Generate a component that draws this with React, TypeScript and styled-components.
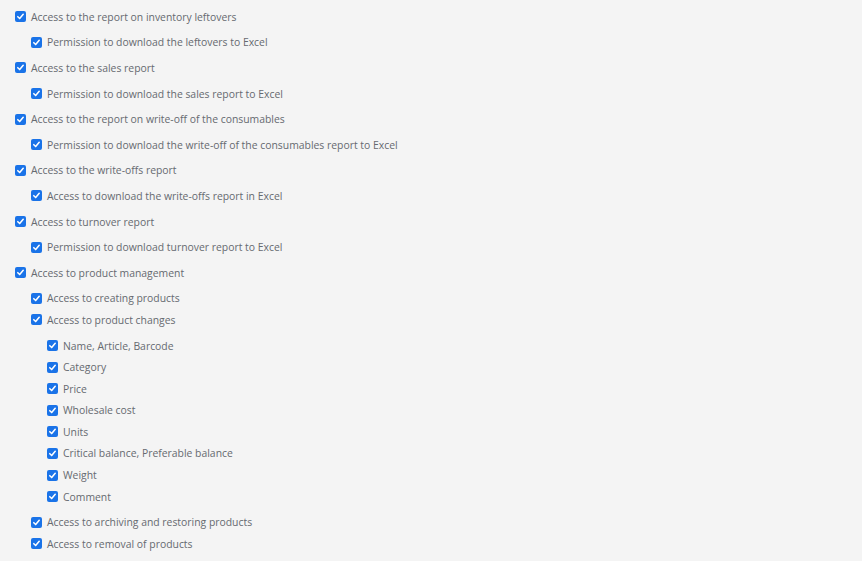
import React from "react";
import styled, { createGlobalStyle } from "styled-components";

const Global = createGlobalStyle`
  html, body { margin: 0; padding: 0; background: #f4f4f4; }
  body { font-family: "Open Sans", "Noto Sans", sans-serif; }
`;

type Node = { label: string; children?: Node[] };

const data: Node[] = [
  { label: "Access to the report on inventory leftovers", children: [{ label: "Permission to download the leftovers to Excel" }] },
  { label: "Access to the sales report", children: [{ label: "Permission to download the sales report to Excel" }] },
  { label: "Access to the report on write-off of the consumables", children: [{ label: "Permission to download the write-off of the consumables report to Excel" }] },
  { label: "Access to the write-offs report", children: [{ label: "Access to download the write-offs report in Excel" }] },
  { label: "Access to turnover report", children: [{ label: "Permission to download turnover report to Excel" }] },
  {
    label: "Access to product management",
    children: [
      { label: "Access to creating products" },
      {
        label: "Access to product changes",
        children: [
          { label: "Name, Article, Barcode" },
          { label: "Category" },
          { label: "Price" },
          { label: "Wholesale cost" },
          { label: "Units" },
          { label: "Critical balance, Preferable balance" },
          { label: "Weight" },
          { label: "Comment" },
        ],
      },
      { label: "Access to archiving and restoring products" },
      { label: "Access to removal of products" },
    ],
  },
];

const Page = styled.div`
  padding: 6px 0 0 15px;
  display: flex;
  flex-direction: column;
`;

const Group = styled.div<{ $nested?: boolean }>`
  display: flex;
  flex-direction: column;
  padding-left: ${(p) => (p.$nested ? "16px" : "0")};
  margin: ${(p) => (p.$nested ? "4px 0" : "0")};
`;

const Row = styled.label`
  display: flex;
  align-items: center;
  gap: 5px;
  height: 21.6px;
  font-size: 10.4px;
  color: #666a70;
  cursor: pointer;
`;

const Box = styled.span`
  width: 11px;
  height: 11px;
  border-radius: 2px;
  background: #1a73e8;
  display: inline-flex;
  align-items: center;
  justify-content: center;
  flex: none;
`;

const Check = () => (
  <Box>
    <svg width="9" height="9" viewBox="0 0 10 10">
      <path d="M2 5.2 L4.1 7.3 L8 2.6" fill="none" stroke="#fff" strokeWidth="1.7" strokeLinecap="round" strokeLinejoin="round" />
    </svg>
  </Box>
);

const Tree = ({ nodes, nested }: { nodes: Node[]; nested?: boolean }) => (
  <Group $nested={nested}>
    {nodes.map((n) => (
      <React.Fragment key={n.label}>
        <Row>
          <Check />
          <span>{n.label}</span>
        </Row>
        {n.children && <Tree nodes={n.children} nested />}
      </React.Fragment>
    ))}
  </Group>
);

export default function App() {
  return (
    <>
      <Global />
      <Page>
        <Tree nodes={data} />
      </Page>
    </>
  );
}
